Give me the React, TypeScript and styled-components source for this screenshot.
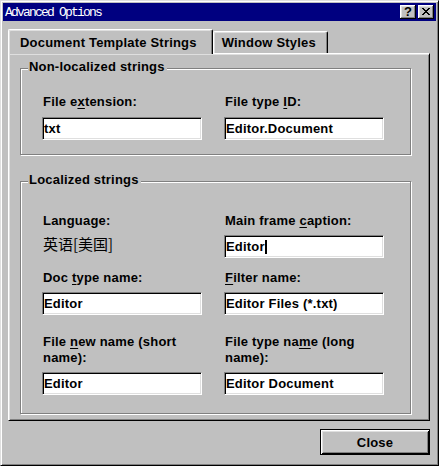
import React from 'react';
import styled, { createGlobalStyle } from 'styled-components';

const Global = createGlobalStyle`
  html, body { margin: 0; padding: 0; background: #c0c0c0; }
  *, *::before, *::after { box-sizing: border-box; }
`;

const Window = styled.div`
  width: 439px;
  height: 466px;
  background: #c0c0c0;
  border: 1px solid;
  border-color: #dfdfdf #000 #000 #dfdfdf;
  box-shadow: inset 1px 1px 0 #fff, inset -1px -1px 0 #808080;
  padding: 2px;
  display: flex;
  flex-direction: column;
  font-family: "Liberation Sans", Arial, sans-serif;
  font-weight: bold;
  font-size: 13px;
  letter-spacing: 0.2px;
  color: #000;
`;

const TitleBar = styled.div`
  height: 18px;
  flex: none;
  background: #000080;
  display: flex;
  align-items: center;
  justify-content: space-between;
  padding: 0 2px;
`;

const TitleText = styled.span`
  font-family: "Liberation Mono", "Courier New", monospace;
  font-weight: normal;
  font-size: 13px;
  letter-spacing: -1.8px;
  color: #fff;
  line-height: 18px;
  padding-top: 1px;
`;

const CaptionButtons = styled.div`
  display: flex;
  gap: 2px;
`;

const CaptionButton = styled.div`
  width: 16px;
  height: 14px;
  background: #c0c0c0;
  box-shadow: inset -1px -1px 0 #000, inset 1px 1px 0 #fff, inset -2px -2px 0 #808080, inset 2px 2px 0 #dfdfdf;
  display: flex;
  align-items: center;
  justify-content: center;
  font-size: 13px;
  line-height: 14px;
  letter-spacing: 0;
  padding-bottom: 1px;
`;

const TabRow = styled.div`
  display: flex;
  align-items: flex-end;
  height: 24px;
  flex: none;
  margin: 8px 0 0 5px;
  position: relative;
  z-index: 1;
`;

const Tab = styled.div<{ $active?: boolean }>`
  height: ${(p) => (p.$active ? 25 : 22)}px;
  margin-bottom: ${(p) => (p.$active ? -1 : 0)}px;
  padding: ${(p) => (p.$active ? '5px 15px 0 11px' : '3px 11px 0 8px')};
  line-height: 16px;
  background: #c0c0c0;
  border-top: 1px solid #fff;
  border-left: 1px solid #fff;
  border-right: 1px solid #000;
  border-radius: 2px 2px 0 0;
  box-shadow: inset -1px 0 0 #808080, inset 1px 1px 0 #dfdfdf;
  white-space: nowrap;
`;

const Panel = styled.div`
  margin: 0 6px 0 5px;
  height: 368px;
  flex: none;
  border: 1px solid;
  border-color: #fff #000 #000 #fff;
  box-shadow: inset 1px 1px 0 #dfdfdf, inset -1px -1px 0 #808080;
  padding: 14px 0 0 11px;
  display: flex;
  flex-direction: column;
  gap: 26px;
`;

const GroupBox = styled.div<{ $h: number; $pt: number }>`
  position: relative;
  width: 391px;
  height: ${(p) => p.$h}px;
  flex: none;
  border: 1px solid #808080;
  box-shadow: inset 1px 1px 0 #fff, 1px 1px 0 #fff;
  padding: ${(p) => p.$pt}px 0 0 21px;
`;

const Legend = styled.span`
  position: absolute;
  top: -10px;
  left: 7px;
  padding: 0 2px 0 1px;
  background: #c0c0c0;
  line-height: 16px;
  white-space: nowrap;
`;

const FieldGrid = styled.div`
  display: grid;
  grid-template-columns: 160px 160px;
  column-gap: 22px;
  row-gap: 12px;
  align-items: start;
`;

const Field = styled.div<{ $gap?: number; $mt?: number }>`
  display: flex;
  flex-direction: column;
  gap: ${(p) => p.$gap ?? 6}px;
  margin-top: ${(p) => p.$mt ?? 0}px;
`;

const Label = styled.div`
  line-height: 16px;
  padding-left: 1px;
`;

const Key = styled.span`
  text-decoration: underline;
  text-underline-offset: 2px;
`;

const Edit = styled.div`
  height: 23px;
  background: #fff;
  border: 1px solid;
  border-color: #808080 #fff #fff #808080;
  box-shadow: inset 1px 1px 0 #000, inset -1px -1px 0 #dfdfdf;
  padding: 0 1px;
  line-height: 21px;
  white-space: nowrap;
  overflow: hidden;
  display: flex;
  align-items: center;
`;

const Caret = styled.span`
  display: inline-block;
  width: 2px;
  height: 14px;
  background: #000;
`;

const StaticText = styled.div`
  font-family: "Noto Sans CJK SC", sans-serif;
  font-weight: normal;
  font-size: 15px;
  line-height: 17px;
  letter-spacing: 0;
  padding-left: 1px;
`;

const Footer = styled.div`
  display: flex;
  justify-content: flex-end;
  padding: 8px 6px 0 0;
`;

const PushButton = styled.button`
  width: 110px;
  height: 26px;
  background: #c0c0c0;
  border: 1px solid #000;
  border-radius: 0;
  box-shadow: inset 1px 1px 0 #fff, inset -1px -1px 0 #000, inset 2px 2px 0 #dfdfdf, inset -2px -2px 0 #808080;
  font: inherit;
  letter-spacing: inherit;
  color: #000;
  padding: 0;
  cursor: default;
`;

const CloseGlyph = () => (
  <svg width="8" height="7" viewBox="0 0 8 7" shapeRendering="crispEdges">
    <path
      fill="#000"
      d="M0 0h2v1H0zM6 0h2v1H6zM1 1h2v1H1zM5 1h2v1H5zM2 2h4v1H2zM3 3h2v1H3zM2 4h4v1H2zM1 5h2v1H1zM5 5h2v1H5zM0 6h2v1H0zM6 6h2v1H6z"
    />
  </svg>
);

export default function App() {
  return (
    <>
      <Global />
      <Window>
        <TitleBar>
          <TitleText>Advanced Options</TitleText>
          <CaptionButtons>
            <CaptionButton>?</CaptionButton>
            <CaptionButton>
              <CloseGlyph />
            </CaptionButton>
          </CaptionButtons>
        </TitleBar>

        <TabRow>
          <Tab $active>Document Template Strings</Tab>
          <Tab>Window Styles</Tab>
        </TabRow>

        <Panel>
          <GroupBox $h={87} $pt={25}>
            <Legend>Non-localized strings</Legend>
            <FieldGrid>
              <Field $gap={7}>
                <Label>
                  File e<Key>x</Key>tension:
                </Label>
                <Edit>txt</Edit>
              </Field>
              <Field $gap={7}>
                <Label>
                  File type <Key>I</Key>D:
                </Label>
                <Edit>Editor.Document</Edit>
              </Field>
            </FieldGrid>
          </GroupBox>

          <GroupBox $h={233} $pt={31}>
            <Legend>Localized strings</Legend>
            <FieldGrid>
              <Field>
                <Label>Language:</Label>
                <StaticText>英语[美国]</StaticText>
              </Field>
              <Field>
                <Label>
                  Main frame <Key>c</Key>aption:
                </Label>
                <Edit>
                  Editor
                  <Caret />
                </Edit>
              </Field>
              <Field>
                <Label>
                  Doc <Key>t</Key>ype name:
                </Label>
                <Edit>Editor</Edit>
              </Field>
              <Field>
                <Label>
                  <Key>F</Key>ilter name:
                </Label>
                <Edit>Editor Files (*.txt)</Edit>
              </Field>
              <Field $mt={7}>
                <Label>
                  File <Key>n</Key>ew name (short
                  <br />
                  name):
                </Label>
                <Edit>Editor</Edit>
              </Field>
              <Field $mt={7}>
                <Label>
                  File type na<Key>m</Key>e (long
                  <br />
                  name):
                </Label>
                <Edit>Editor Document</Edit>
              </Field>
            </FieldGrid>
          </GroupBox>
        </Panel>

        <Footer>
          <PushButton>Close</PushButton>
        </Footer>
      </Window>
    </>
  );
}
